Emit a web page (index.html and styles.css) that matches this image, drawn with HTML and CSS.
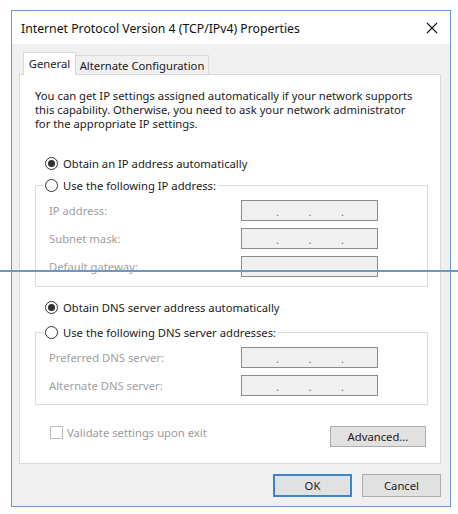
FILE: index.html
```html
<!DOCTYPE html>
<html>
<head>
<meta charset="utf-8">
<link rel="stylesheet" href="styles.css">
</head>
<body>
<div class="hline"></div>
<div class="window">
  <div class="titlebar">
    <span class="title">Internet Protocol Version 4 (TCP/IPv4) Properties</span>
    <svg class="close" width="12" height="12" viewBox="0 0 12 12"><path d="M1 1 L11 11 M11 1 L1 11" stroke="#111" stroke-width="1.1" fill="none"/></svg>
  </div>
  <div class="client">
    <div class="tabs">
      <div class="tab active">General</div>
      <div class="tab">Alternate Configuration</div>
    </div>
    <div class="panel">
      <p class="desc">You can get IP settings assigned automatically if your network supports<br>this capability. Otherwise, you need to ask your network administrator<br>for the appropriate IP settings.</p>
      <div class="radio-row row-ip"><span class="radio checked"></span><span>Obtain an IP address automatically</span></div>
      <fieldset class="group group-ip">
        <legend><span class="radio"></span><span>Use the following IP address:</span></legend>
        <div class="field"><span class="flabel">IP address:</span><span class="ipbox"><span class="dot">.</span><span class="dot">.</span><span class="dot">.</span></span></div>
        <div class="field"><span class="flabel">Subnet mask:</span><span class="ipbox"><span class="dot">.</span><span class="dot">.</span><span class="dot">.</span></span></div>
        <div class="field"><span class="flabel">Default gateway:</span><span class="ipbox"><span class="dot">.</span><span class="dot">.</span><span class="dot">.</span></span></div>
      </fieldset>
      <div class="radio-row row-dns"><span class="radio checked"></span><span>Obtain DNS server address automatically</span></div>
      <fieldset class="group group-dns">
        <legend><span class="radio"></span><span>Use the following DNS server addresses:</span></legend>
        <div class="field"><span class="flabel">Preferred DNS server:</span><span class="ipbox"><span class="dot">.</span><span class="dot">.</span><span class="dot">.</span></span></div>
        <div class="field"><span class="flabel">Alternate DNS server:</span><span class="ipbox"><span class="dot">.</span><span class="dot">.</span><span class="dot">.</span></span></div>
      </fieldset>
      <div class="bottom-row">
        <div class="check-row"><span class="checkbox"></span><span>Validate settings upon exit</span></div>
        <button class="btn advanced">Advanced...</button>
      </div>
    </div>
    <div class="buttons">
      <button class="btn ok">OK</button>
      <button class="btn">Cancel</button>
    </div>
  </div>
</div>
</body>
</html>
```
FILE: styles.css
```css
* { box-sizing: border-box; }
html, body { margin: 0; padding: 0; background: #ffffff; }
body {
  font-family: "Noto Sans", "Open Sans", sans-serif;
  font-size: 11.25px;
  color: #1a1a1a;
  position: relative;
  width: 458px;
  height: 514px;
  overflow: hidden;
}
.hline {
  position: absolute;
  left: 0;
  top: 270px;
  width: 458px;
  height: 2px;
  background: #6a98cc;
  z-index: 10;
}
.window {
  margin: 10px 0 0 11px;
  width: 440px;
  height: 497px;
  border: 1px solid #6a9ad0;
  display: flex;
  flex-direction: column;
}
.titlebar {
  height: 33px;
  background: #ffffff;
  display: flex;
  align-items: center;
  padding: 0 12px 0 9px;
  justify-content: space-between;
}
.title { font-size: 12.25px; color: #111; padding-top: 1px; }
.close { width: 12px; height: 12px; }
.client {
  flex: 1;
  background: #f0f0f0;
  padding: 8px 9px 0 7px;
  display: flex;
  flex-direction: column;
}
.tabs {
  display: flex;
  align-items: flex-end;
  height: 22px;
  padding-left: 4px;
}
.tab {
  height: 19px;
  border: 1px solid #d9d9d9;
  border-bottom: none;
  background: #f0f0f0;
  padding: 0 4px;
  display: flex;
  align-items: center;
  justify-content: center;
  color: #1a1a1a;
  white-space: nowrap;
}
.tab.active {
  height: 23px;
  width: 53px;
  background: #ffffff;
  margin-bottom: -1px;
  position: relative;
  z-index: 2;
  padding-bottom: 2px;
}
.tab:not(.active) { width: 133px; border-left: none; }
.panel {
  height: 390px;
  background: #ffffff;
  border: 1px solid #d9d9d9;
  padding: 0 12px 0 15px;
}
.desc {
  margin: 14px 0 0 0;
  line-height: 14px;
  white-space: nowrap;
}
.radio-row {
  display: flex;
  align-items: center;
  height: 16px;
  padding-left: 10px;
}
.row-ip { margin-top: 24px; }
.row-dns { margin-top: 12px; }
.radio {
  width: 13px;
  height: 13px;
  border: 1px solid #333;
  border-radius: 50%;
  display: inline-flex;
  align-items: center;
  justify-content: center;
  margin-right: 5px;
  background: #fff;
  flex: none;
}
.radio.checked::after {
  content: "";
  width: 7px;
  height: 7px;
  border-radius: 50%;
  background: #333;
}
.group {
  margin: 6px 0 0 0;
  padding: 7px 0 9px 8px;
  border: 1px solid #dcdcdc;
  min-width: 0;
}
.group-dns { margin-top: 9px; padding-bottom: 8px; }
legend {
  padding: 0 2px 0 1px;
  display: flex;
  align-items: center;
  height: 16px;
}
.field {
  display: flex;
  align-items: center;
  height: 21px;
  margin-top: 7px;
}
.field:first-of-type { margin-top: 0; }
.flabel {
  width: 192px;
  margin-left: 5px;
  color: #a0a0a0;
}
.ipbox {
  width: 137px;
  height: 21px;
  border: 1px solid #8c8c8c;
  background: #f0f0f0;
  display: flex;
  padding-left: 34px;
  padding-top: 4px;
  color: #707070;
  font-size: 11px;
  line-height: 14px;
}
.dot { width: 32.5px; }
.bottom-row {
  margin-top: 21px;
  display: flex;
  justify-content: space-between;
  align-items: flex-start;
  padding-right: 2px;
}
.check-row {
  display: flex;
  align-items: center;
  height: 13px;
  padding-left: 15px;
  color: #9a9a9a;
}
.checkbox {
  width: 13px;
  height: 13px;
  border: 1px solid #bcbcbc;
  background: #fff;
  margin-right: 4px;
}
.btn {
  font-family: inherit;
  font-size: 11.25px;
  color: #1a1a1a;
  background: #e1e1e1;
  border: 1px solid #adadad;
  height: 23px;
  width: 79px;
  padding: 0;
  margin: 0;
}
.advanced { width: 96px; height: 21px; }
.buttons {
  display: flex;
  justify-content: flex-end;
  gap: 10px;
  margin-top: 10px;
}
.ok { border: 2px solid #3a84d0; }
```
